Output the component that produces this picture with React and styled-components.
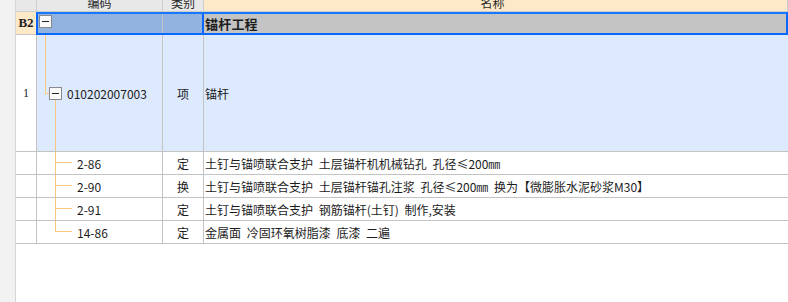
import React from "react";
import styled, { createGlobalStyle, css } from "styled-components";

const GlobalStyle = createGlobalStyle`
  html, body { margin: 0; padding: 0; background: #ffffff; }
  body {
    font-family: "Noto Sans CJK SC", "Noto Sans", sans-serif;
    font-size: 12px;
    color: #1c1c1c;
  }
`;

const GRID_LINE = "#c3c3c3";
const TREE = "#f9c87c";

const Page = styled.div`
  display: flex;
  width: 788px;
  height: 302px;
  overflow: hidden;
`;

const LeftStrip = styled.div`
  width: 15px;
  flex: none;
  background: #f2f2f2;
  border-right: 1px solid #d6d6d6;
`;

const Table = styled.div`
  flex: 1;
  display: flex;
  flex-direction: column;
  min-width: 0;
`;

const Row = styled.div`
  display: grid;
  grid-template-columns: 21px 126px 41px 1fr;
  height: ${(p) => p.$h}px;
  box-sizing: border-box;
  background: ${(p) => p.$bg || "#ffffff"};
`;

const Cell = styled.div`
  box-sizing: border-box;
  border-right: 1px solid ${GRID_LINE};
  border-bottom: 1px solid ${GRID_LINE};
  display: flex;
  align-items: center;
  white-space: nowrap;
  overflow: hidden;
  min-width: 0;
  ${(p) => p.$center && css`justify-content: center;`}
  ${(p) => p.$bg && css`background: ${p.$bg};`}
`;

const HeadCell = styled(Cell)`
  background: ${(p) => (p.$active ? "#fde8c8" : "#e8e8e8")};
  border-color: #cdcdcd;
  align-items: flex-end;
  justify-content: center;
  ${(p) => p.$padRight && css`padding-right: ${p.$padRight}px;`}
`;

const HeadText = styled.span`
  line-height: 12px;
  margin-bottom: 2px;
  color: #2a2a2a;
`;

const RowNum = styled(Cell)`
  justify-content: center;
  font-family: "Liberation Serif", "DejaVu Serif", serif;
  font-size: 12px;
  color: #222;
  ${(p) =>
    p.$active &&
    css`
      background: #fde8c8;
      font-weight: bold;
      font-size: 13px;
      border-right: none;
    `}
`;

const SelectedRow = styled.div`
  display: grid;
  grid-template-columns: 20px 1fr;
  height: 23px;
`;

const SelectionBox = styled.div`
  display: grid;
  grid-template-columns: 125px 41px 1fr;
  box-sizing: border-box;
  border: 2px solid #0a68ff;
  border-top-color: #1877ff;
  height: 23px;
`;

const SelCell = styled.div`
  box-sizing: border-box;
  display: flex;
  align-items: center;
  background: ${(p) => p.$bg};
  border-right: ${(p) => p.$border};
  overflow: hidden;
  white-space: nowrap;
  position: relative;
`;

const GroupTitle = styled.span`
  font-weight: bold;
  font-size: 13px;
  padding-left: 1px;
  color: #1e1e1e;
  letter-spacing: 0.2px;
`;

const ToggleBox = styled.span`
  width: 13px;
  height: 13px;
  box-sizing: border-box;
  border: 1px solid #8a8a8a;
  background: #fafafa;
  display: inline-flex;
  align-items: center;
  justify-content: center;
  flex: none;
  position: relative;
  z-index: 1;
  &::before {
    content: "";
    width: 7px;
    height: 1px;
    background: #222;
  }
`;

const TopToggle = styled(ToggleBox)`
  margin-left: 1px;
  align-self: flex-start;
  margin-top: 1px;
`;

const CodeCell = styled(Cell)`
  position: relative;
  padding-left: ${(p) => p.$pad}px;
`;

/* connector: line from the group toggle down into the parent node */
const ParentLines = styled.span`
  position: absolute;
  left: 8px;
  top: 0;
  width: 4px;
  height: 58px;
  border-left: 1px solid ${TREE};
  border-bottom: 1px solid ${TREE};
  pointer-events: none;
`;

const ChildTrunk = styled.span`
  position: absolute;
  left: 18px;
  top: 63px;
  bottom: -1px;
  border-left: 1px solid ${TREE};
  pointer-events: none;
`;

const Branch = styled.span`
  position: absolute;
  left: 18px;
  top: -1px;
  height: ${(p) => (p.$last ? "12px" : "calc(100% + 1px)")};
  width: 17px;
  pointer-events: none;
  &::before {
    content: "";
    position: absolute;
    left: 0;
    top: 0;
    bottom: 0;
    border-left: 1px solid ${TREE};
  }
  &::after {
    content: "";
    position: absolute;
    left: 0;
    right: 0;
    top: 11px;
    border-top: 1px solid ${TREE};
  }
`;

const CodeText = styled.span`
  margin-left: ${(p) => p.$gap || 0}px;
  color: #1c1c1c;
`;

const NameCell = styled(Cell)`
  padding-left: 1px;
  word-spacing: 3px;
  border-right: none;
`;

const BlankArea = styled.div`
  flex: 1;
  background: #ffffff;
`;

const children = [
  { code: "2-86", type: "定", name: "土钉与锚喷联合支护 土层锚杆机机械钻孔 孔径≤200㎜" },
  { code: "2-90", type: "换", name: "土钉与锚喷联合支护 土层锚杆锚孔注浆 孔径≤200㎜ 换为【微膨胀水泥砂浆M30】" },
  { code: "2-91", type: "定", name: "土钉与锚喷联合支护 钢筋锚杆(土钉) 制作,安装" },
  { code: "14-86", type: "定", name: "金属面 冷固环氧树脂漆 底漆 二遍" },
];

export default function App() {
  return (
    <>
      <GlobalStyle />
      <Page>
        <LeftStrip />
        <Table>
          <Row $h={12}>
            <HeadCell />
            <HeadCell>
              <HeadText>编码</HeadText>
            </HeadCell>
            <HeadCell>
              <HeadText>类别</HeadText>
            </HeadCell>
            <HeadCell $active $padRight={6}>
              <HeadText>名称</HeadText>
            </HeadCell>
          </Row>

          <SelectedRow>
            <RowNum $active>B2</RowNum>
            <SelectionBox>
              <SelCell $bg="#92b3df" $border={`1px solid ${GRID_LINE}`}>
                <TopToggle />
              </SelCell>
              <SelCell $bg="#92b3df" $border="2px solid #0a68ff" />
              <SelCell $bg="#c4c4c4">
                <GroupTitle>锚杆工程</GroupTitle>
              </SelCell>
            </SelectionBox>
          </SelectedRow>

          <Row $h={117} $bg="#dde9fd">
            <RowNum $bg="#ffffff">1</RowNum>
            <CodeCell $pad={12}>
              <ParentLines />
              <ToggleBox />
              <CodeText $gap={5}>010202007003</CodeText>
              <ChildTrunk />
            </CodeCell>
            <Cell $center>项</Cell>
            <NameCell>锚杆</NameCell>
          </Row>

          {children.map((c, i) => (
            <Row key={c.code} $h={23}>
              <RowNum />
              <CodeCell $pad={40}>
                <Branch $last={i === children.length - 1} />
                <CodeText>{c.code}</CodeText>
              </CodeCell>
              <Cell $center>{c.type}</Cell>
              <NameCell>{c.name}</NameCell>
            </Row>
          ))}
          <BlankArea />
        </Table>
      </Page>
    </>
  );
}
